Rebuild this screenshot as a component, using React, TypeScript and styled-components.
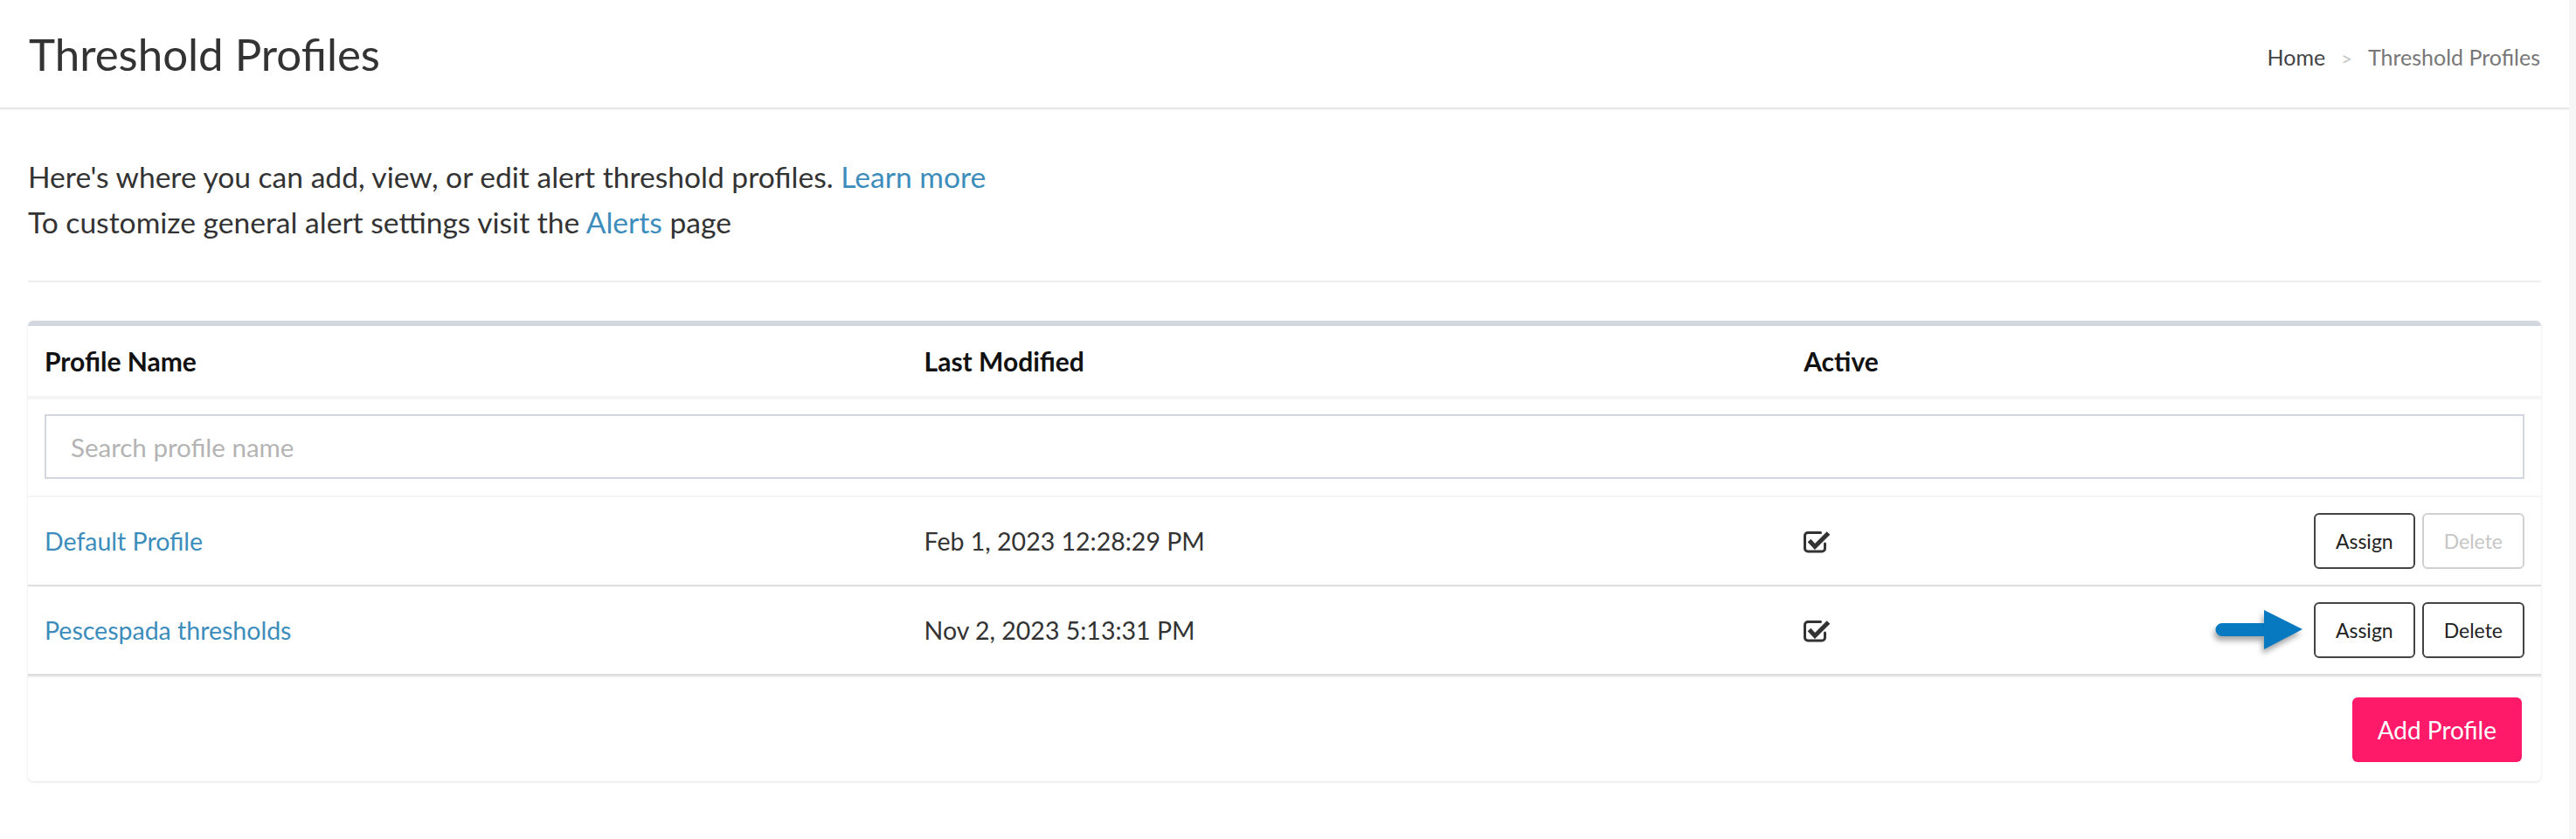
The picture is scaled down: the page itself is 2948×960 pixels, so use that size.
import React from 'react';
import styled, { createGlobalStyle } from 'styled-components';

const GlobalStyle = createGlobalStyle`
  html, body {
    margin: 0;
    padding: 0;
    background: #ffffff;
  }
  body {
    font-family: Lato, "Open Sans", "Liberation Sans", sans-serif;
    color: #333;
  }
  * {
    box-sizing: border-box;
  }
`;

const Shell = styled.div`
  display: flex;
  min-height: 960px;
`;

const Main = styled.div`
  flex: 1;
  background: #fff;
`;

const Gutter = styled.div`
  width: 8px;
  background: #f6f6f6;
`;

const Header = styled.header`
  height: 125px;
  display: flex;
  align-items: center;
  justify-content: space-between;
  padding: 0 33px;
  border-bottom: 2px solid #e6e6e6;
  box-shadow: 0 1px 2px rgba(0, 0, 0, 0.04);
`;

const Title = styled.h1`
  margin: 0;
  font-size: 51px;
  font-weight: 400;
  line-height: 1;
  color: #333;
`;

const Crumbs = styled.ol`
  display: flex;
  align-items: baseline;
  gap: 18px;
  margin: 8px 0 0;
  padding: 0;
  list-style: none;
  font-size: 25px;
  line-height: 1;
`;

const Crumb = styled.li<{ $current?: boolean }>`
  color: ${(p) => (p.$current ? '#777' : '#444')};
`;

const CrumbSep = styled.li`
  color: #c4c4c4;
  font-size: 22px;
`;

const Content = styled.main`
  padding: 51px 32px 0;
`;

const Intro = styled.p`
  margin: 0;
  font-size: 33.6px;
  line-height: 52px;
  color: #333;
`;

const Link = styled.a`
  color: #3c8dbc;
  text-decoration: none;
`;

const Divider = styled.hr`
  margin: 41px 0 0;
  border: 0;
  border-top: 2px solid #eeeeee;
`;

const Box = styled.section`
  margin-top: 44px;
  background: #fff;
  border-top: 6px solid #d2d6de;
  border-radius: 6px;
  box-shadow: 0 1px 3px rgba(0, 0, 0, 0.12);
`;

const Table = styled.table`
  width: 100%;
  border-collapse: separate;
  border-spacing: 0;
  table-layout: fixed;
`;

const HeadCell = styled.th`
  box-sizing: content-box;
  height: 80px;
  padding: 0 19px;
  text-align: left;
  vertical-align: middle;
  font-size: 30px;
  font-weight: 700;
  color: #111;
  border-bottom: 4px solid #f4f4f4;
`;

const SearchCell = styled.td`
  box-sizing: content-box;
  padding: 17px 19px 19px;
  border-bottom: 2px solid #f4f4f4;
`;

const SearchInput = styled.input`
  display: block;
  width: 100%;
  height: 74px;
  padding: 0 28px;
  border: 2px solid #d2d6de;
  border-radius: 0;
  font-family: inherit;
  font-size: 29.5px;
  color: #333;
  outline: none;

  &::placeholder {
    color: #b4b4b4;
  }
`;

const Cell = styled.td`
  box-sizing: content-box;
  height: 100px;
  padding: 0 19px;
  vertical-align: middle;
  font-size: 28.5px;
  color: #333;
  border-bottom: 2px solid #dddddd;
`;

const Actions = styled.div`
  display: flex;
  align-items: center;
  gap: 8px;
`;

const ActiveMark = styled.div`
  flex: 1;
  display: flex;
  align-items: center;
`;

const ButtonSlot = styled.div`
  position: relative;
  display: flex;
`;

const SmallButton = styled.button<{ $muted?: boolean }>`
  height: 64px;
  padding: 0 23px;
  background: #fff;
  border: 2px solid ${(p) => (p.$muted ? '#d0d0d0' : '#444')};
  border-radius: 6px;
  font-family: inherit;
  font-size: 23px;
  color: ${(p) => (p.$muted ? '#c6c6c6' : '#222')};
  cursor: ${(p) => (p.$muted ? 'default' : 'pointer')};
`;

const Pointer = styled.svg`
  position: absolute;
  top: 50%;
  right: calc(100% + 9px);
  width: 104px;
  height: 50px;
  transform: translateY(-50%);
  filter: drop-shadow(-2px 5px 3px rgba(0, 0, 0, 0.35));
`;

const Footer = styled.div`
  display: flex;
  justify-content: flex-end;
  padding: 23px 22px 22px;
  border-top: 2px solid #eeeeee;
`;

const PrimaryButton = styled.button`
  height: 74px;
  padding: 0 29px;
  background: #ff1a69;
  border: 0;
  border-radius: 6px;
  font-family: inherit;
  font-size: 28px;
  color: #fff;
  cursor: pointer;
`;

const CheckIcon = () => (
  <svg width="31" height="27" viewBox="0 0 31 27" fill="none">
    <path
      d="M19.5 3.5H5a3.5 3.5 0 0 0-3.5 3.5v14.5A3.5 3.5 0 0 0 5 25h16a3.5 3.5 0 0 0 3.5-3.5V16"
      stroke="#333"
      strokeWidth="3"
      strokeLinecap="round"
    />
    <path d="M6.5 12.5l6.5 7L28.5 4" stroke="#333" strokeWidth="5" strokeLinejoin="miter" />
  </svg>
);

const profiles = [
  { name: 'Default Profile', modified: 'Feb 1, 2023 12:28:29 PM', canDelete: false, pointed: false },
  { name: 'Pescespada thresholds', modified: 'Nov 2, 2023 5:13:31 PM', canDelete: true, pointed: true },
];

export default function App() {
  return (
    <>
      <GlobalStyle />
      <Shell>
        <Main>
          <Header>
            <Title>Threshold Profiles</Title>
            <Crumbs>
              <Crumb>Home</Crumb>
              <CrumbSep>&gt;</CrumbSep>
              <Crumb $current>Threshold Profiles</Crumb>
            </Crumbs>
          </Header>
          <Content>
            <Intro>
              Here's where you can add, view, or edit alert threshold profiles. <Link href="#">Learn more</Link>
              <br />
              To customize general alert settings visit the <Link href="#">Alerts</Link> page
            </Intro>
            <Divider />
            <Box>
              <Table>
                <colgroup>
                  <col style={{ width: '35%' }} />
                  <col style={{ width: '35%' }} />
                  <col style={{ width: '30%' }} />
                </colgroup>
                <thead>
                  <tr>
                    <HeadCell>Profile Name</HeadCell>
                    <HeadCell>Last Modified</HeadCell>
                    <HeadCell>Active</HeadCell>
                  </tr>
                </thead>
                <tbody>
                  <tr>
                    <SearchCell colSpan={3}>
                      <SearchInput placeholder="Search profile name" />
                    </SearchCell>
                  </tr>
                  {profiles.map((p) => (
                    <tr key={p.name}>
                      <Cell>
                        <Link href="#">{p.name}</Link>
                      </Cell>
                      <Cell>{p.modified}</Cell>
                      <Cell>
                        <Actions>
                          <ActiveMark>
                            <CheckIcon />
                          </ActiveMark>
                          <ButtonSlot>
                            {p.pointed && (
                              <Pointer viewBox="0 0 104 50">
                                <path d="M8 17h48V2l44 22-44 23V32H8a7.5 7.5 0 0 1 0-15z" fill="#0679c1" />
                              </Pointer>
                            )}
                            <SmallButton>Assign</SmallButton>
                          </ButtonSlot>
                          <SmallButton $muted={!p.canDelete}>Delete</SmallButton>
                        </Actions>
                      </Cell>
                    </tr>
                  ))}
                </tbody>
              </Table>
              <Footer>
                <PrimaryButton>Add Profile</PrimaryButton>
              </Footer>
            </Box>
          </Content>
        </Main>
        <Gutter />
      </Shell>
    </>
  );
}
